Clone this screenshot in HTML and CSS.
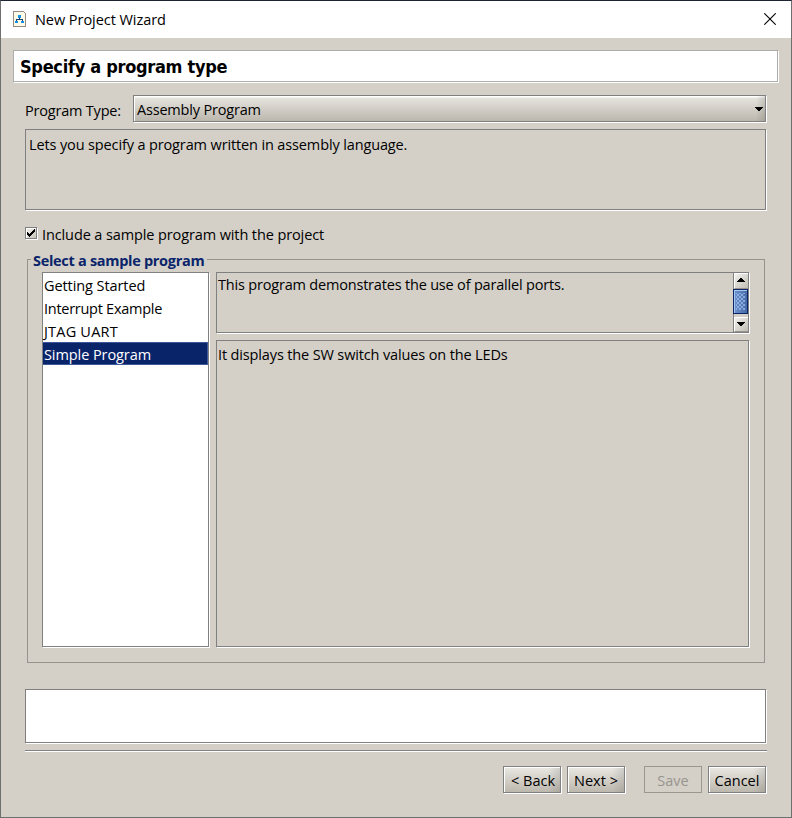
FILE: index.html
```html
<!DOCTYPE html>
<html lang="en">
<head>
<meta charset="utf-8">
<title>New Project Wizard</title>
<link rel="stylesheet" href="styles.css">
</head>
<body>
<div class="window">
  <header class="titlebar">
    <svg class="app-icon" width="13" height="16" viewBox="0 0 13 16" shape-rendering="crispEdges">
      <path d="M.5.5h10l2 2v13H.5z" fill="#fffbe6" stroke="#958a83"/>
      <path d="M6.500 7v2M3.500 11V8.500h6V11" fill="none" stroke="#1b3f66"/>
      <path d="M5 4h3v3H5zM2 10h3v2H2zM8 10h3v2H8z" fill="#1590e8"/>
    </svg>
    <span class="title">New Project Wizard</span>
    <svg class="close" width="12" height="12" viewBox="0 0 12 12"><path d="M.3.3l11.400 11.400M11.700.3L.3 11.700" stroke="#000" stroke-width="1.100"/></svg>
  </header>
  <main class="content">
    <h1 class="heading">Specify a program type</h1>
    <div class="type-row">
      <label>Program Type:</label>
      <div class="combo"><span>Assembly Program</span>
        <svg width="8" height="4" viewBox="0 0 8 4" shape-rendering="crispEdges"><path d="M0 0h8v1H7v1H6v1H5v1H3V3H2V2H1V1H0z"/></svg>
      </div>
    </div>
    <div class="box description"><span>Lets you specify a program written in assembly language.</span></div>
    <div class="check-row">
      <span class="checkbox"><svg width="8" height="8" viewBox="0 0 8 8" shape-rendering="crispEdges"><path d="M0 3h1v1h1v1h1V4h1V3h1V2h1V1h1V0h1v3H7v1H6v1H5v1H4v1H3v1H2V7H1V6H0z"/></svg></span>
      <span class="check-label">Include a sample program with the project</span>
    </div>
    <fieldset class="group">
      <legend>Select a sample program</legend>
      <div class="group-grid">
        <ul class="box list">
          <li>Getting Started</li>
          <li class="tight">Interrupt Example</li>
          <li class="wide">JTAG UART</li>
          <li class="selected">Simple Program</li>
        </ul>
        <div class="details">
          <div class="box summary">
            <span>This program demonstrates the use of parallel ports.</span>
            <div class="scrollbar">
              <div class="arrow"><svg width="8" height="4" viewBox="0 0 8 4" shape-rendering="crispEdges"><path d="M0 4h8V3H7V2H6V1H5V0H3v1H2v1H1v1H0z"/></svg></div>
              <div class="thumb"><div class="grip"></div></div>
              <div class="arrow down"><svg width="8" height="4" viewBox="0 0 8 4" shape-rendering="crispEdges"><path d="M0 0h8v1H7v1H6v1H5v1H3V3H2V2H1V1H0z"/></svg></div>
            </div>
          </div>
          <div class="box body"><span>It displays the SW switch values on the LEDs</span></div>
        </div>
      </div>
    </fieldset>
    <div class="box messages"></div>
    <div class="separator"></div>
    <footer class="actions">
      <button class="back">&lt; Back</button>
      <button>Next &gt;</button>
      <button class="save" disabled>Save</button>
      <button>Cancel</button>
    </footer>
  </main>
</div>
</body>
</html>
```
FILE: styles.css
```css
* { box-sizing: border-box; }
body { margin: 0; background: #d4d0c8; color: #000; font: 14.5px/20px "Open Sans", "Noto Sans", sans-serif; }
span, label { white-space: nowrap; }
.window { width: 792px; height: 818px; border: 1px solid #6f6f6d; border-top-color: #1b2433; background: #d4d0c8; overflow: hidden; }
.titlebar { height: 37px; background: #fff; display: flex; align-items: center; padding: 0 15px 0 12px; }
.app-icon { margin-top: -1px; }
.title { margin: 1px 0 0 9px; letter-spacing: -.05px; }
.close { margin: -1px 0 0 auto; }
.content { padding: 12px 0 0 12px; }
.heading { margin: 0; width: 765px; height: 32px; border: 1px solid #acacac; background: #fff; box-shadow: 1px 1px #fff; padding: 5px 6px; font: bold 18px/22px "DejaVu Sans Condensed", "Noto Sans", sans-serif; letter-spacing: -.3px; }
.type-row { display: flex; align-items: center; margin: 13px 0 0 12px; width: 741px; height: 27px; }
.type-row label { width: 108px; padding-top: 5px; letter-spacing: -.2px; }
.combo { flex: 1; height: 27px; display: flex; align-items: center; justify-content: space-between; border: 1px solid #808080; padding: 0 2px 0 3px; background: linear-gradient(90deg, #fff 1px, transparent 1px, transparent 622px, rgba(0,0,0,.12)), linear-gradient(#fff 1px, #e5e3dd 2px, #bcb7ad); box-shadow: 1px 1px #fff; }
.combo span { padding-top: 2px; letter-spacing: -.19px; }
.box { border: 1px solid #808080; box-shadow: 1px 1px #fff; }
.description { width: 741px; height: 81px; margin: 7px 0 0 12px; padding: 5px 3px; letter-spacing: -.13px; }
.check-row { display: flex; align-items: center; margin: 14px 0 0 12px; height: 20px; }
.check-label { padding-top: 2px; letter-spacing: -.11px; }
.checkbox { width: 12px; height: 12px; border: 1px solid #808080; background: linear-gradient(135deg, #f4f3f0, #c7c3ba); box-shadow: 1px 1px #fff, inset 1px 1px #fff; display: flex; align-items: center; justify-content: center; margin: -3px 5px 0 0; }
.group { width: 738px; height: 414px; margin: 5px 0 0 14px; padding: 0 15px; border: 1px solid #95938e; }
.group legend { height: 20px; margin-left: -12px; padding: 0 3px 0 2px; line-height: 23px; font-weight: bold; color: #0a246a; letter-spacing: -.3px; }
.group-grid { display: grid; grid-template-columns: 167px 533px; gap: 7px; margin-left: -1px; margin-top: 3px; height: 375px; }
.list { margin: 0; padding: 0; list-style: none; background: #fff; }
.list li { height: 23px; padding: 1px 1px; border: 1px solid transparent; border-left: 0; line-height: 22px; letter-spacing: -.08px; }
.list .tight { letter-spacing: -.27px; }
.list .wide { letter-spacing: .2px; }
.list .selected { background: #0a246a; border-color: #3b5998; color: #fff; }
.details { display: grid; grid-template-rows: 61px 307px; gap: 7px; }
.summary { display: flex; justify-content: space-between; padding-left: 1px; line-height: 24px; letter-spacing: -.19px; }
.body { padding: 4px 1px; letter-spacing: -.14px; }
.scrollbar { width: 15px; height: 59px; display: flex; flex-direction: column; background: #d4d0c8; border-left: 1px solid #808080; }
.arrow { height: 16px; padding: 0 2px 2px 0; display: flex; align-items: center; justify-content: center; border-top: 1px solid #fff; border-left: 1px solid #fff; border-bottom: 1px solid #969289; background: linear-gradient(135deg, #f2f1ee, #c0bcb3); }
.arrow.down { margin-top: auto; height: 15px; padding-bottom: 1px; }
.thumb { height: 25px; margin-left: -1px; border: 1px solid #0a246a; background: linear-gradient(90deg, #6f93cd, #466aa5); box-shadow: inset 1px 1px #a8c8f4; padding: 3px 2px; }
.grip { height: 100%; background: radial-gradient(circle, #9dbdf0 .6px, transparent 1px) 0 0/4px 4px, radial-gradient(circle, #9dbdf0 .6px, transparent 1px) 2px 2px/4px 4px; }
.messages { width: 741px; height: 54px; margin: 26px 0 0 12px; background: #fff; }
.separator { width: 742px; height: 2px; margin: 7px 0 0 12px; background: #808080; border-bottom: 1px solid #fff; }
.actions { width: 741px; margin: 14px 0 0 12px; display: flex; justify-content: flex-end; gap: 6px; }
button { width: 58px; height: 27px; padding: 2px 0 0; margin: 0; border: 1px solid #808080; background: linear-gradient(90deg, transparent 44px, rgba(0,0,0,.1)), linear-gradient(#eae8e3, #bdb8ae); box-shadow: 1px 1px #fff, inset 1px 1px #fff; font: inherit; color: #000; }
button.back { padding-left: 2px; }
button.save { margin-left: 13px; background: #d4d0c8; box-shadow: none; border-color: #9a9791; color: #98958f; }
```
